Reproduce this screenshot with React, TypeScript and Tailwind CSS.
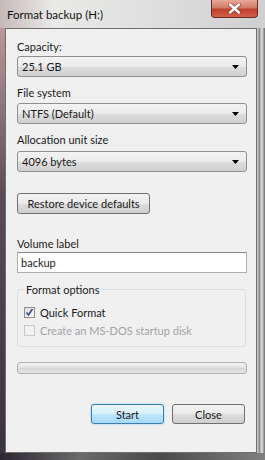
import React from "react";

const font = { fontFamily: 'Lato, "Noto Sans", sans-serif' };

function Combo({ value }: { value: string }) {
  return (
    <div className="flex h-[21px] w-[230px] items-center justify-between rounded-[3px] border border-[#8e8f8f] bg-[linear-gradient(to_bottom,#f3f3f3_0%,#ebebeb_50%,#dddddd_51%,#d0d0d0_100%)] pl-[4px] pr-[7px]">
      <span className="text-[11px] leading-none text-[#1a1a1a]">{value}</span>
      <svg width="7" height="4" viewBox="0 0 7 4">
        <path d="M0 0h7L3.5 4z" fill="#000" />
      </svg>
    </div>
  );
}

function Label({ children, className = "" }: { children: React.ReactNode; className?: string }) {
  return <div className={`text-[11px] leading-[15px] text-[#1a1a1a] ${className}`}>{children}</div>;
}

function Check({ checked, disabled, label }: { checked?: boolean; disabled?: boolean; label: string }) {
  return (
    <div className="flex items-center gap-[5px]">
      <div
        className={`flex h-[11px] w-[11px] items-center justify-center border ${
          disabled ? "border-[#c8c8c8] bg-[#f2f2f2]" : "border-[#8f8f8f] bg-[linear-gradient(135deg,#dcdcdc,#fafafa)]"
        }`}
      >
        {checked && (
          <svg width="9" height="9" viewBox="0 0 9 9">
            <path d="M1.5 4.5l2 2.5 4-6" stroke="#3c4a8c" strokeWidth="1.6" fill="none" />
          </svg>
        )}
      </div>
      <span className={`text-[11px] leading-none ${disabled ? "text-[#a3a3a3]" : "text-[#1a1a1a]"}`}>{label}</span>
    </div>
  );
}

export default function App() {
  return (
    <div className="flex h-[460px] w-[265px] flex-col overflow-hidden bg-[linear-gradient(to_right,#8a6f78_0px,#c9c3c3_5px,#dcdcdc_40%,#d2d2d2_100%)]" style={font}>
      {/* Title bar */}
      <div className="flex h-[28px] items-start justify-between bg-[linear-gradient(to_right,#c7b9b9,#e9e9e7_20%,#dedede_60%,#cfcfcf)]">
        <span className="ml-[7px] mt-[7px] text-[11.5px] leading-[15px] text-[#111]">Format backup (H:)</span>
        <div className="mr-[7px] flex h-[18px] w-[47px] items-center justify-center rounded-b-[4px] border border-t-0 border-[#6b2a22] bg-[linear-gradient(to_bottom,#e8a899_0%,#d47b6a_45%,#c2402c_55%,#d0604a_100%)]">
          <svg width="13" height="11" viewBox="0 0 13 11">
            <path d="M2 1.5l9 8M11 1.5l-9 8" stroke="#6a2a20" strokeWidth="4" strokeLinecap="round" opacity="0.6" />
            <path d="M2 1.5l9 8M11 1.5l-9 8" stroke="#fff" strokeWidth="2.4" strokeLinecap="round" />
          </svg>
        </div>
      </div>

      <div className="flex flex-1">
        <div className="w-[5px] bg-[linear-gradient(to_bottom,#b99a9c,#5a4a55_40%,#3a3340_100%)]" />
        <div className="flex flex-1 flex-col border border-[#6e6e6e] bg-[#f0f0f0] pl-[11px]">
          <Label className="mt-[10px]">Capacity:</Label>
          <div className="mt-[2px]">
            <Combo value="25.1 GB" />
          </div>
          <Label className="mt-[8px]">File system</Label>
          <div className="mt-[3px]">
            <Combo value="NTFS (Default)" />
          </div>
          <Label className="mt-[8px]">Allocation unit size</Label>
          <div className="mt-[4px]">
            <Combo value="4096 bytes" />
          </div>
          <div className="mt-[21px]">
            <div className="flex h-[21px] w-[133px] items-center justify-center rounded-[3px] border border-[#707070] bg-[linear-gradient(to_bottom,#f2f2f2_0%,#ebebeb_50%,#dddddd_51%,#cfcfcf_100%)] text-[11px] leading-none text-[#1a1a1a]">
              Restore device defaults
            </div>
          </div>
          <Label className="mt-[22px]">Volume label</Label>
          <div className="mt-[1px] flex h-[21px] w-[230px] items-center border border-[#abadb3] border-t-[#828790] bg-white pl-[3px] text-[11px] leading-none text-[#1a1a1a]">
            backup
          </div>

          {/* Format options group */}
          <div className="relative mt-[16px] h-[58px] w-[229px] rounded-[3px] border border-[#d5dfe5]">
            <span className="absolute left-[7px] top-[-8px] bg-[#f0f0f0] px-[1px] text-[11px] leading-[15px] text-[#1a1a1a]">Format options</span>
            <div className="ml-[6px] mt-[17px] flex flex-col gap-[7px]">
              <Check checked label="Quick Format" />
              <Check disabled label="Create an MS-DOS startup disk" />
            </div>
          </div>

          {/* Progress bar */}
          <div className="mt-[15px] h-[12px] w-[230px] rounded-[3px] border border-[#b2b2b2] bg-[linear-gradient(to_bottom,#f3f3f3,#e0e0e0_50%,#d6d6d6_51%,#e4e4e4)]" />

          <div className="mt-[30px] flex w-[230px] justify-end gap-[8px] pr-[2px]">
            <div className="flex h-[20px] w-[73px] items-center justify-center rounded-[3px] border border-[#3c7fb1] bg-[linear-gradient(to_bottom,#eaf6fd_0%,#d9f0fc_50%,#bee6fd_51%,#a7d9f5_100%)] text-[11px] leading-none text-[#1a1a1a] shadow-[0_0_2px_#79c4ee]">
              Start
            </div>
            <div className="flex h-[20px] w-[73px] items-center justify-center rounded-[3px] border border-[#707070] bg-[linear-gradient(to_bottom,#f2f2f2_0%,#ebebeb_50%,#dddddd_51%,#cfcfcf_100%)] text-[11px] leading-none text-[#1a1a1a]">
              Close
            </div>
          </div>
        </div>
        <div className="w-[8px] bg-[linear-gradient(to_right,#d4d4d4,#8c8c8c_30%,#e2e2e2_60%,#6a6a6a)]" />
      </div>
      <div className="h-[7px] bg-[linear-gradient(to_right,#2c2630,#6a6a6a_30%,#4a4a4a_60%,#808080)]" />
    </div>
  );
}
